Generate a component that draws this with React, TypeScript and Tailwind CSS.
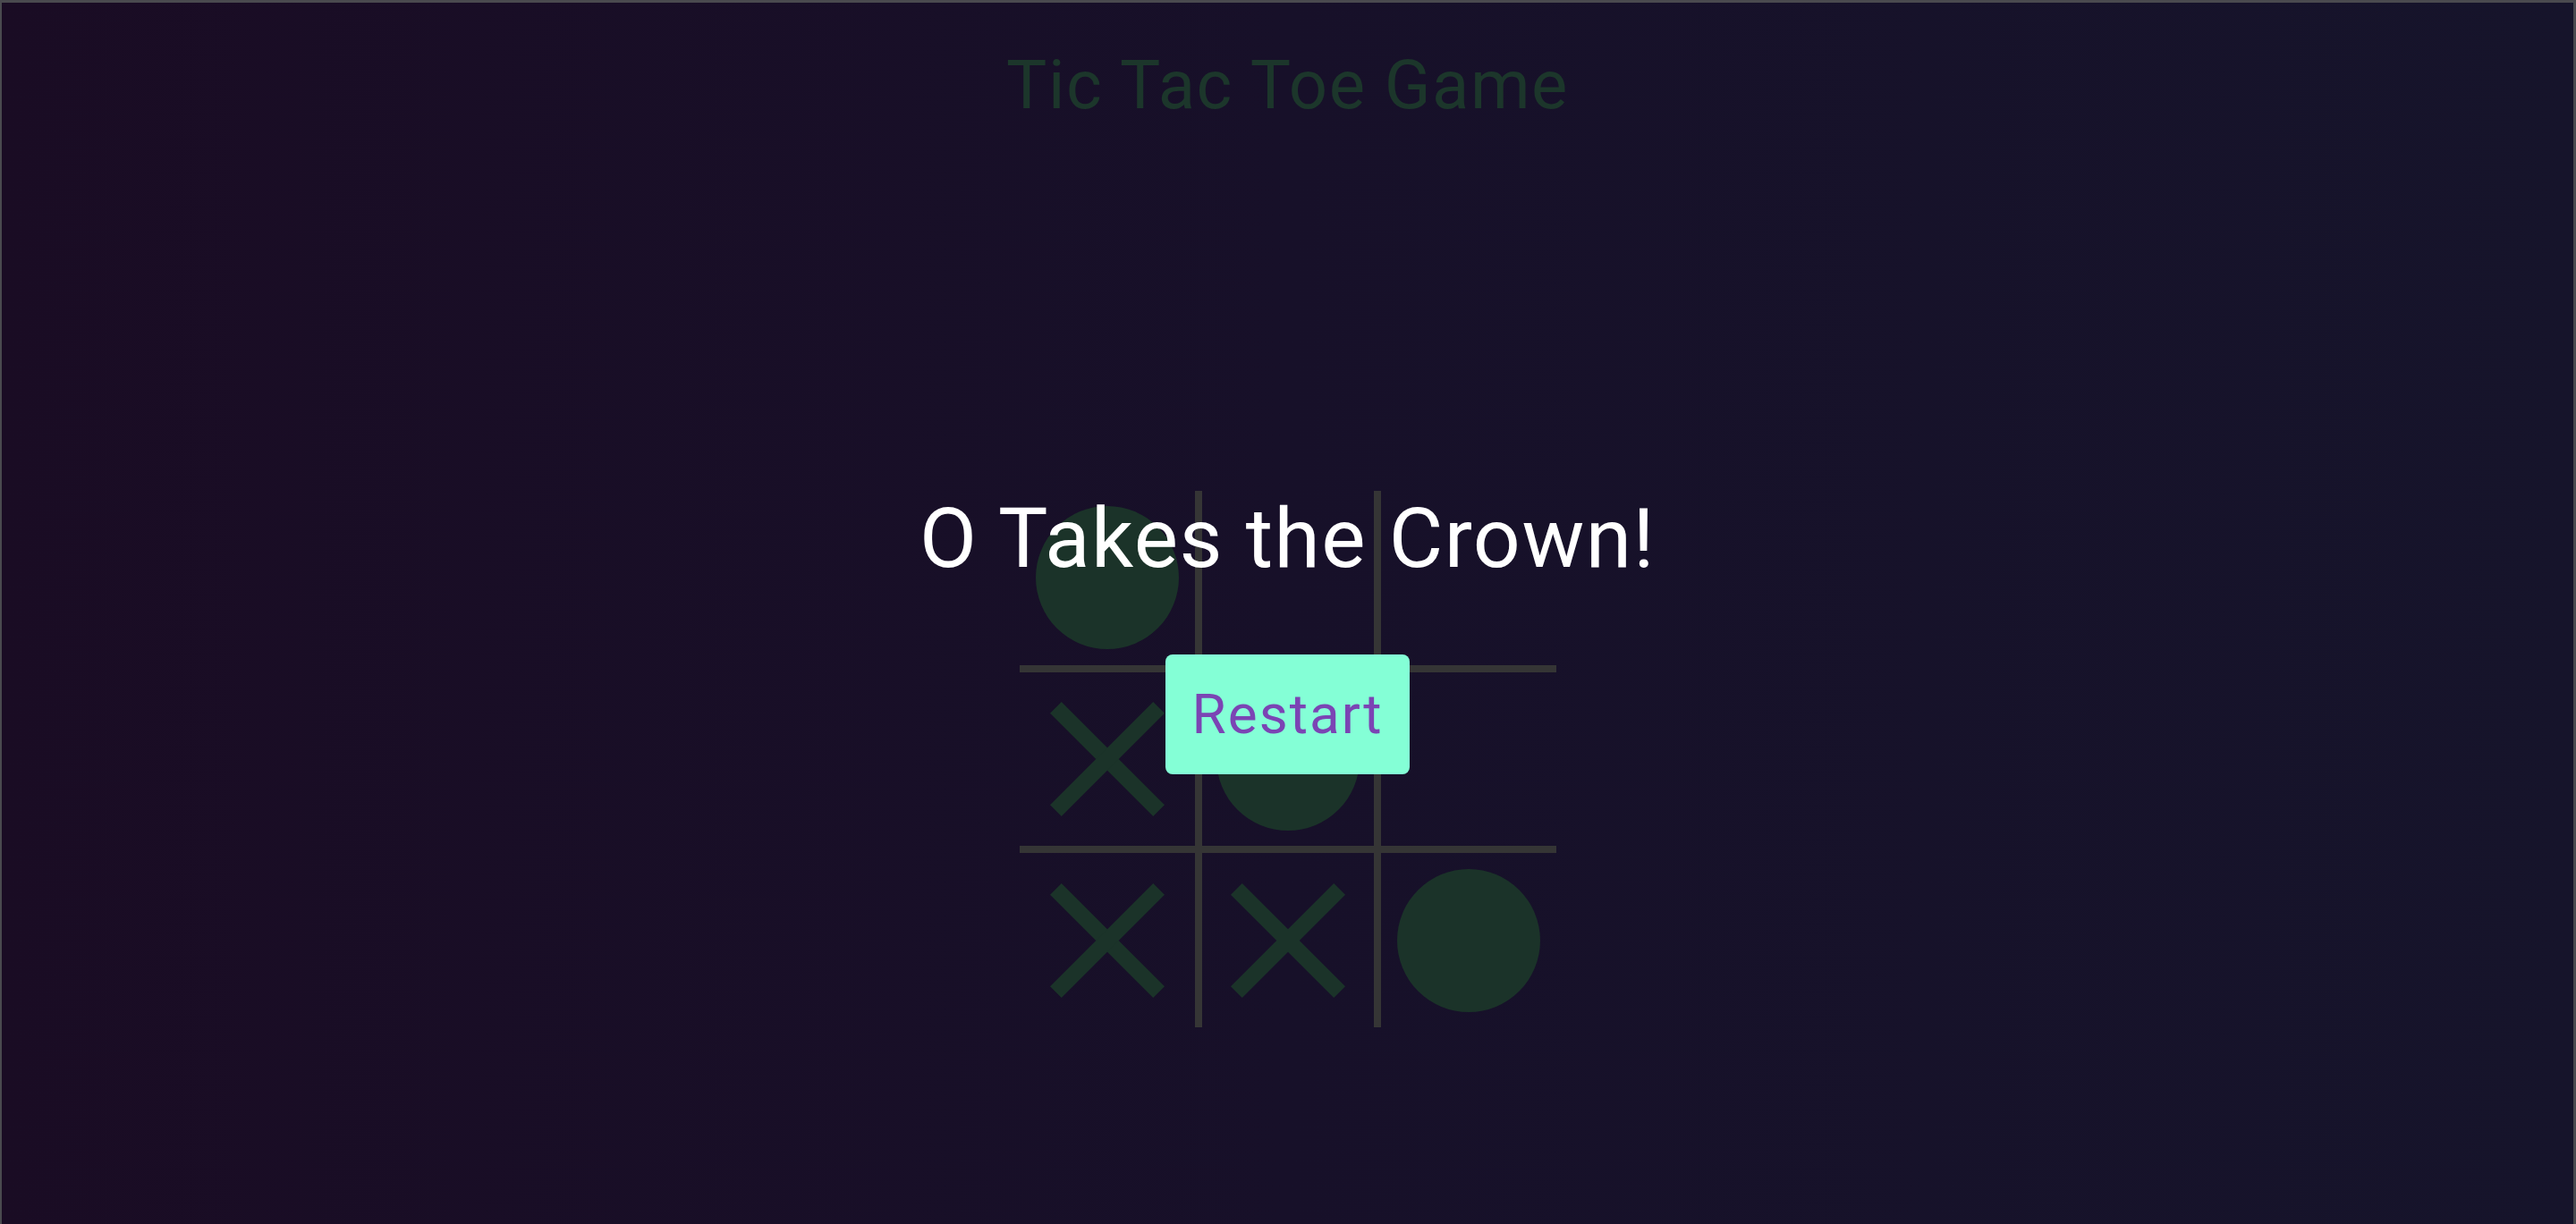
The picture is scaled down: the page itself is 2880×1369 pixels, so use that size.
import React from "react";

type Mark = "X" | "O" | null;

const board: Mark[] = ["O", null, null, "X", "O", null, "X", "X", "O"];

function cellBorder(i: number) {
  const row = Math.floor(i / 3);
  const col = i % 3;
  const cls: string[] = [];
  if (col === 0) cls.push("border-r-4");
  if (col === 1) cls.push("border-x-4");
  if (col === 2) cls.push("border-l-4");
  if (row === 0) cls.push("border-b-4");
  if (row === 1) cls.push("border-y-4");
  if (row === 2) cls.push("border-t-4");
  return cls.join(" ");
}

function Cross() {
  return (
    <div className="relative w-[128px] h-[128px]">
      <span className="absolute left-1/2 top-1/2 w-[163px] h-[18px] -translate-x-1/2 -translate-y-1/2 rotate-45 bg-[#1b3329]" />
      <span className="absolute left-1/2 top-1/2 w-[163px] h-[18px] -translate-x-1/2 -translate-y-1/2 -rotate-45 bg-[#1b3329]" />
    </div>
  );
}

function Circle() {
  return <div className="w-[160px] h-[160px] rounded-full bg-[#1b3329]" />;
}

export default function App() {
  return (
    <div
      className="relative h-[1369px] w-full overflow-hidden border-t-[3px] border-l-2 border-r-[3px] border-[#4a4a4f] bg-linear-to-r from-[#1a0c24] via-[#171029] to-[#16142b]"
      style={{ fontFamily: "Roboto, 'Noto Sans', sans-serif" }}
    >
      <div className="flex flex-col items-center pt-[54px]">
        {/* Title */}
        <h1 className="text-[76px] leading-none tracking-[1.5px] text-[#1c362b]">Tic Tac Toe Game</h1>

        {/* Board */}
        <div className="mt-[416px] grid grid-cols-3 w-[600px] h-[600px]">
          {board.map((m, i) => (
            <div
              key={i}
              className={`flex items-center justify-center border-[#353535] ${cellBorder(i)}`}
            >
              {m === "X" && <Cross />}
              {m === "O" && <Circle />}
            </div>
          ))}
        </div>
      </div>

      {/* Winner overlay */}
      <div className="absolute inset-0 flex flex-col items-center pt-[553px]">
        <h2 className="text-[93px] leading-none tracking-[1.5px] text-white">O Takes the Crown!</h2>
        <button className="mt-[83px] h-[134px] px-[30px] flex items-center rounded-lg bg-[#84ffd6] text-[62px] leading-none tracking-[2px] text-[#7b44b4]">
          Restart
        </button>
      </div>
    </div>
  );
}
